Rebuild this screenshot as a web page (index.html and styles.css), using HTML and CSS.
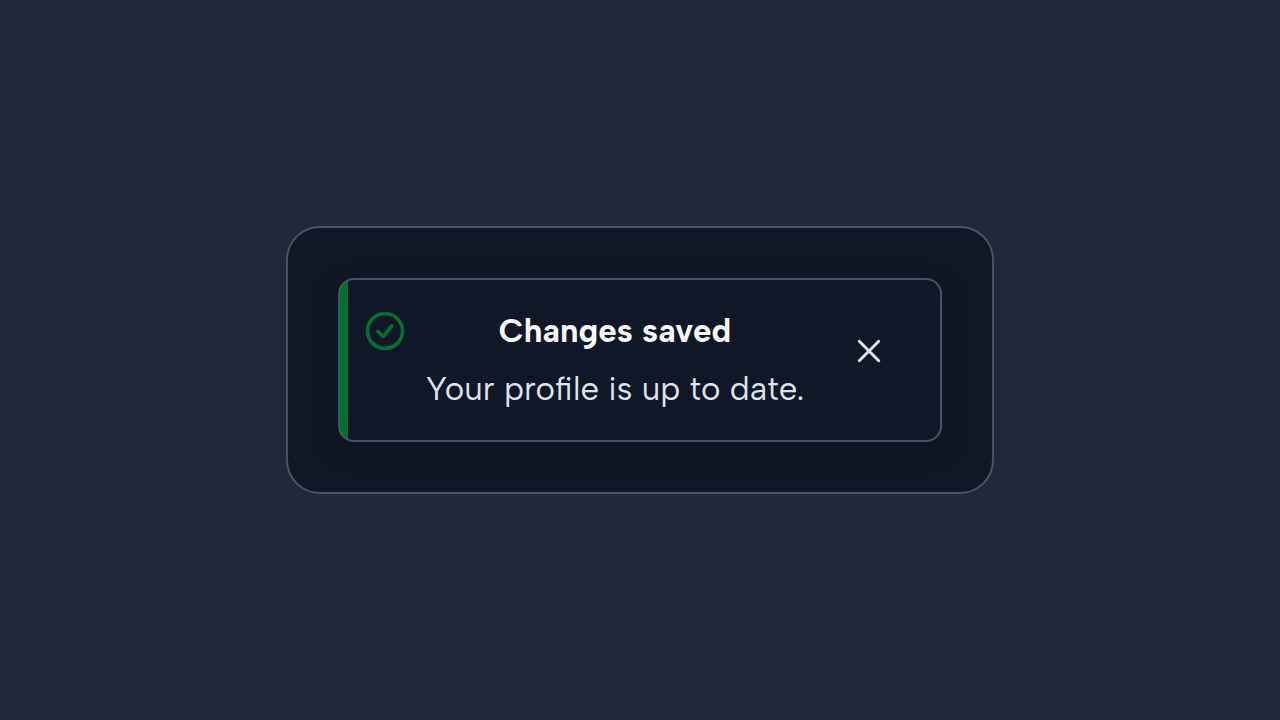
FILE: index.html
```html
<!DOCTYPE html>
<html lang="en">
<head>
<meta charset="utf-8">
<meta name="viewport" content="width=device-width, initial-scale=1">
<title>Changes saved</title>
<link rel="stylesheet" href="styles.css">
</head>
<body>
<main class="panel">
  <section class="toast" role="status">
    <svg class="toast-icon" viewBox="0 0 40 40" aria-hidden="true">
      <circle cx="20" cy="20" r="17.5"/>
      <path d="M12.8 20.4L18.2 25.3L26.7 15"/>
    </svg>
    <div class="toast-text">
      <h1 class="toast-title">Changes saved</h1>
      <p class="toast-message">Your profile is up to date.</p>
    </div>
    <button class="toast-close" type="button" aria-label="Dismiss">
      <svg class="close-icon" viewBox="0 0 24 24" aria-hidden="true">
        <path d="M2.3 2.3L21.7 21.7M21.7 2.3L2.3 21.7"/>
      </svg>
    </button>
  </section>
</main>
</body>
</html>
```
FILE: styles.css
```css
* {
  box-sizing: border-box;
}

body {
  margin: 0;
  min-height: 100vh;
  display: flex;
  align-items: center;
  justify-content: center;
  background: #22273a;
  color: #dde3ec;
  font-family: "Albert Sans", Figtree, Lato, sans-serif;
}

.panel {
  padding: 50px;
  border: 2px solid #475366;
  border-radius: 34px;
  background: #101725;
}

.toast {
  display: flex;
  align-items: flex-start;
  gap: 18px;
  padding: 22px 47px 22px 25px;
  border: 2px solid #475366;
  border-radius: 16px;
  background: linear-gradient(to right, #00732f 8px, #101726 8px);
  box-shadow: 0 8px 24px rgba(13, 22, 34, 0.4);
}

.toast-icon {
  flex: none;
  width: 40px;
  height: 40px;
  margin-top: 9px;
  fill: none;
  stroke: #00732f;
  stroke-width: 3.6;
  stroke-linecap: round;
  stroke-linejoin: round;
}

.toast-text {
  padding: 0 3px;
  text-align: center;
}

.toast-title,
.toast-message {
  margin: 0;
  font-size: 33px;
  line-height: 58px;
}

.toast-title {
  color: #f8f9fc;
  font-weight: 700;
}

.toast-message {
  font-weight: 400;
}

.toast-close {
  display: flex;
  align-items: center;
  justify-content: center;
  width: 48px;
  height: 48px;
  margin: 25px 0 0 20px;
  padding: 0;
  border: 0;
  background: none;
  color: inherit;
  cursor: pointer;
}

.close-icon {
  width: 24px;
  height: 24px;
  fill: none;
  stroke: currentColor;
  stroke-width: 3;
  stroke-linecap: round;
}
```
